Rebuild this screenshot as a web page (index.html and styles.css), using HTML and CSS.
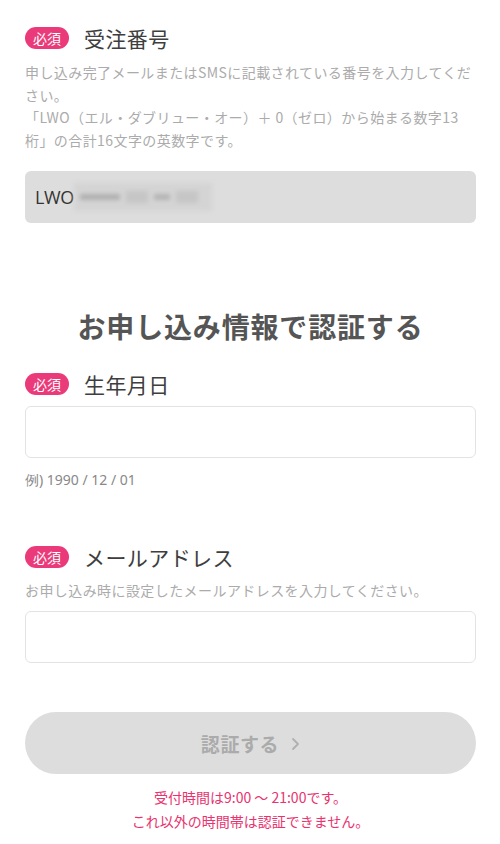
FILE: index.html
```
<!DOCTYPE html>
<html lang="ja">
  <head>
    <meta charset="utf-8">
    <title>認証</title>
    <link rel="stylesheet" href="styles.css">
  </head>
  <body>
    <div class="page">
      <!-- 受注番号 -->
      <div class="field-head first">
        <span class="badge">必須</span>
        <span class="field-title">受注番号</span>
      </div>
      <p class="desc">申し込み完了メールまたはSMSに記載されている番号を入力してください。<br>「LWO（エル・ダブリュー・オー）＋ 0（ゼロ）から始まる数字13桁」の合計16文字の英数字です。</p>
      <div class="order-box">
        <span class="order-text">LWO</span>
        <span class="masked">
          <span class="mask-bar dark"></span>
          <span class="mask-bar light"></span>
          <span class="mask-bar mid"></span>
          <span class="mask-bar light"></span>
        </span>
      </div>

      <h2 class="section-title">お申し込み情報で認証する</h2>

      <!-- 生年月日 -->
      <div class="field-head birth">
        <span class="badge">必須</span>
        <span class="field-title">生年月日</span>
      </div>
      <input type="text" class="text-input birth-input">
      <p class="example">例) 1990 / 12 / 01</p>

      <!-- メールアドレス -->
      <div class="field-head mail">
        <span class="badge">必須</span>
        <span class="field-title">メールアドレス</span>
      </div>
      <p class="desc mail-desc">お申し込み時に設定したメールアドレスを入力してください。</p>
      <input type="text" class="text-input mail-input">

      <button class="submit" disabled>
        認証する
        <svg class="chevron" width="9" height="14" viewBox="0 0 9 14">
          <polyline points="2,2 7,7 2,12" fill="none" stroke="#b0b0b0" stroke-width="1.8" stroke-linecap="round" stroke-linejoin="round"/>
        </svg>
      </button>

      <p class="notice">受付時間は9:00 ～ 21:00です。<br>これ以外の時間帯は認証できません。</p>
    </div>
  </body>
</html>
```

FILE: styles.css
```
body {
  margin: 0;
  background-color: #fff;
  font-family: "Noto Sans CJK JP", "Noto Sans", sans-serif;
  color: #333;
}

.page {
  padding: 27px 24px 20px 25px;
}

.field-head {
  display: flex;
  align-items: center;
  gap: 15px;
  height: 22px;
}

.badge {
  display: inline-flex;
  align-items: center;
  justify-content: center;
  width: 44px;
  height: 22px;
  border-radius: 11px;
  background-color: #ea3a7a;
  color: #fff;
  font-size: 14px;
  line-height: 1;
}

.field-title {
  font-size: 21px;
  color: #3e3e3e;
  letter-spacing: 0.02em;
}

.desc {
  margin: 12px 0 0;
  font-size: 14px;
  line-height: 22.5px;
  letter-spacing: 0.03em;
  color: #ababab;
}

.order-box {
  display: flex;
  align-items: center;
  height: 52px;
  margin-top: 20px;
  padding: 0 10px;
  background-color: #dddddd;
  border-radius: 6px;
}

.order-text {
  font-family: "Open Sans", "Noto Sans", sans-serif;
  font-size: 18px;
  color: #333;
  letter-spacing: -0.02em;
}

.masked {
  display: flex;
  align-items: center;
  width: 138px;
  height: 28px;
  background-color: #d4d4d4;
  filter: blur(2px);
}

.mask-bar {
  height: 6px;
  margin-left: 6px;
}

.mask-bar.dark {
  width: 40px;
  background-color: #b0b0b0;
}

.mask-bar.light {
  width: 22px;
  height: 12px;
  background-color: #c6c6c6;
}

.mask-bar.mid {
  width: 16px;
  background-color: #b4b4b4;
}

.section-title {
  margin: 83px 0 0;
  text-align: center;
  font-size: 28px;
  line-height: 40px;
  font-weight: bold;
  letter-spacing: 0.03em;
  color: #555;
}

.field-head.birth {
  margin-top: 27px;
}

.text-input {
  display: block;
  box-sizing: border-box;
  width: 100%;
  height: 52px;
  border: 1px solid #e3e3e3;
  border-radius: 6px;
  background-color: #fff;
  padding: 0 12px;
  font-size: 16px;
}

.birth-input {
  margin-top: 11px;
}

.example {
  margin: 12px 0 0;
  font-family: "Noto Sans", sans-serif;
  font-size: 14px;
  line-height: 20px;
  color: #888;
}

.field-head.mail {
  margin-top: 56px;
}

.mail-desc {
  margin-top: 11px;
  line-height: 22px;
}

.mail-input {
  margin-top: 10px;
}

.submit {
  display: flex;
  align-items: center;
  justify-content: center;
  gap: 12px;
  width: 100%;
  height: 62px;
  margin-top: 49px;
  border: none;
  border-radius: 31px;
  background-color: #dddddd;
  color: #ababab;
  font-family: "Noto Sans CJK JP", sans-serif;
  font-size: 19px;
  font-weight: bold;
  letter-spacing: 0.03em;
}

.chevron {
  margin-top: 1px;
}

.notice {
  margin: 11px 0 0;
  text-align: center;
  font-size: 14px;
  line-height: 24px;
  color: #e8336f;
}
```
